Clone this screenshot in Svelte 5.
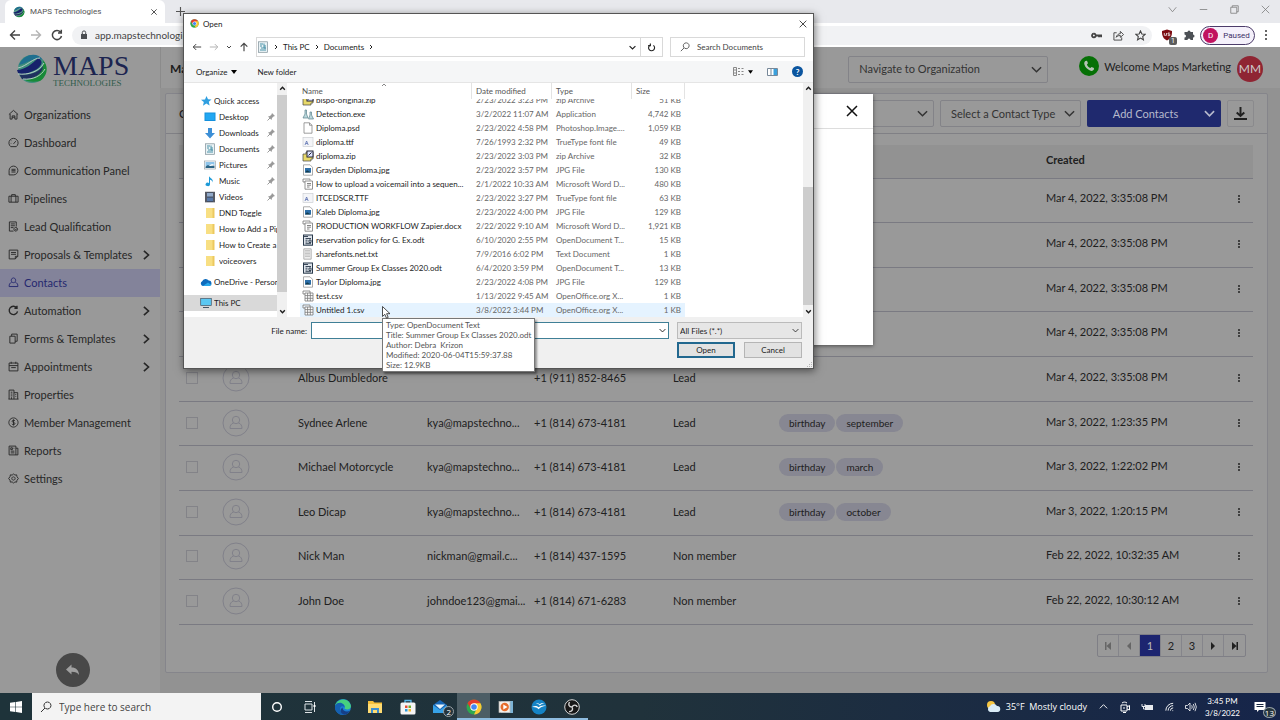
<script>
    const menu = [
        {text: 'Organizations', d: 'M1 6 6 1.5 11 6M2.3 5.5V11H4.5V7.5H7.5V11H9.8V5.5M4.5 9H7.5'},
        {text: 'Dashboard', d: 'M3 10.5A5 5 0 1 1 9 10.5ZM6 7.5 8.5 4.5M3 7H3.6M4 4.2 4.4 4.6'},
        {text: 'Communication Panel', d: 'M1.2 10.8V6A4.8 4.8 0 1 1 6 10.8ZM3.8 4.7H8.2M3.8 6.2H8.2M3.8 7.7H8.2'},
        {text: 'Pipelines', d: 'M1 3.5H11V10H1ZM4 3.5V1.8H8V3.5M3.4 3.5V10M8.6 3.5V10'},
        {text: 'Lead Qualification', d: 'M6 11H1.5V1H9V6M3 3.2H7.5M3 5.2H7.5M3 7.2H6M8.5 7A2 2 0 1 1 8.4 7M7.5 9 8.4 9.8 9.5 8.2'},
        {text: 'Proposals & Templates', d: 'M1.3 1.2H10.7V8L8 10.8H1.3ZM8 10.8V8H10.7M3.3 3.8H8.7M3.3 5.8H8.7', arrow: true},
        {text: 'Contacts', d: 'M6 1A2.4 2.6 0 1 1 5.9 1M4 5.8C2 6.6 1.2 7.6 1.2 10.4H10.8C10.8 7.6 10 6.6 8 5.8', active: true},
        {text: 'Automation', d: 'M10.4 7A4.6 4.6 0 1 1 9.4 2.9M9.8 .8V3.6H7', arrow: true, bold: true},
        {text: 'Forms & Templates', d: 'M2 3.5H7.8V11H2ZM4 3.5V1.2H10V9H7.8', arrow: true},
        {text: 'Appointments', d: 'M1.2 2.2H10.8V10.8H1.2ZM1.2 5H10.8M3.5 .8V3M8.5 .8V3M3.5 7.2H8.5', arrow: true},
        {text: 'Properties', d: 'M1.2 11V1.2H6.5V11M6.5 4H10.6V11M.5 11H11.5M3 3.5H4.8M3 5.5H4.8M3 7.5H4.8M8 6H9M8 8H9M3.8 9V11'},
        {text: 'Member Management', d: 'M6 1A5 5 0 1 1 5.9 1M7.6 4.2C6.5 3 4.4 3.5 4.5 4.8 4.6 6.2 7.6 5.6 7.6 7.2 7.5 8.6 5 8.8 4.2 7.5M6 2.6V9.2'},
        {text: 'Reports', d: 'M1.2 1.2H8.6V10.8H1.2ZM8.6 3.5H10.8V10.8H8.6M3 3H4.8V5H3ZM6 3.5H7M3 6.7H7M3 8.6H7'},
        {text: 'Settings', d: 'M6 .9 7.4 2.3 9.4 2 9.8 4 11.3 6 9.8 8 9.4 10 7.4 9.7 6 11.1 4.6 9.7 2.6 10 2.2 8 .7 6 2.2 4 2.6 2 4.6 2.3ZM6 4.2A1.8 1.8 0 1 1 5.9 4.2'},
    ];

    const contacts = [
        {created: 'Mar 4, 2022, 3:35:08 PM'},
        {created: 'Mar 4, 2022, 3:35:08 PM'},
        {created: 'Mar 4, 2022, 3:35:08 PM'},
        {created: 'Mar 4, 2022, 3:35:08 PM'},
        {name: 'Albus Dumbledore', phone: '+1 (911) 852-8465', type: 'Lead', created: 'Mar 4, 2022, 3:35:08 PM'},
        {name: 'Sydnee Arlene', email: 'kya@mapstechno...', phone: '+1 (814) 673-4181', type: 'Lead', tags: ['birthday', 'september'], created: 'Mar 3, 2022, 1:23:35 PM'},
        {name: 'Michael Motorcycle', email: 'kya@mapstechno...', phone: '+1 (814) 673-4181', type: 'Lead', tags: ['birthday', 'march'], created: 'Mar 3, 2022, 1:22:02 PM'},
        {name: 'Leo Dicap', email: 'kya@mapstechno...', phone: '+1 (814) 673-4181', type: 'Lead', tags: ['birthday', 'october'], created: 'Mar 3, 2022, 1:20:15 PM'},
        {name: 'Nick Man', email: 'nickman@gmail.c...', phone: '+1 (814) 437-1595', type: 'Non member', created: 'Feb 22, 2022, 10:32:35 AM'},
        {name: 'John Doe', email: 'johndoe123@gmai...', phone: '+1 (814) 671-6283', type: 'Non member', created: 'Feb 22, 2022, 10:30:12 AM'},
    ];

    const places = [
        {text: 'Quick access', icon: 'star', top: true},
        {text: 'Desktop', icon: 'desktop', pin: true},
        {text: 'Downloads', icon: 'down', pin: true},
        {text: 'Documents', icon: 'docs', pin: true},
        {text: 'Pictures', icon: 'pictures', pin: true},
        {text: 'Music', icon: 'music', pin: true},
        {text: 'Videos', icon: 'video', pin: true},
        {text: 'DND Toggle', icon: 'folder'},
        {text: 'How to Add a Pipeline', icon: 'folder'},
        {text: 'How to Create a Form', icon: 'folder'},
        {text: 'voiceovers', icon: 'folder'},
        {text: 'OneDrive - Personal', icon: 'cloud', top: true, spaced: true},
        {text: 'This PC', icon: 'pc', top: true, spaced: true, current: true},
    ];

    const files = [
        ['zip', 'bispo-original.zip', '2/23/2022 3:23 PM', 'zip Archive', '51 KB'],
        ['exe', 'Detection.exe', '3/2/2022 11:07 AM', 'Application', '4,742 KB'],
        ['blank', 'Diploma.psd', '2/23/2022 4:58 PM', 'Photoshop.Image....', '1,059 KB'],
        ['font', 'diploma.ttf', '7/26/1993 2:32 PM', 'TrueType font file', '49 KB'],
        ['zip', 'diploma.zip', '2/23/2022 3:03 PM', 'zip Archive', '32 KB'],
        ['jpg', 'Grayden Diploma.jpg', '2/23/2022 3:57 PM', 'JPG File', '130 KB'],
        ['word', 'How to upload a voicemail into a sequen...', '2/1/2022 10:33 AM', 'Microsoft Word D...', '480 KB'],
        ['font', 'ITCEDSCR.TTF', '2/23/2022 3:27 PM', 'TrueType font file', '63 KB'],
        ['jpg', 'Kaleb Diploma.jpg', '2/23/2022 4:00 PM', 'JPG File', '129 KB'],
        ['word', 'PRODUCTION WORKFLOW Zapier.docx', '2/22/2022 9:10 AM', 'Microsoft Word D...', '1,921 KB'],
        ['odt', 'reservation policy for G. Ex.odt', '6/10/2020 2:55 PM', 'OpenDocument T...', '15 KB'],
        ['txt', 'sharefonts.net.txt', '7/9/2016 6:02 PM', 'Text Document', '1 KB'],
        ['odt', 'Summer Group Ex Classes 2020.odt', '6/4/2020 3:59 PM', 'OpenDocument T...', '13 KB'],
        ['jpg', 'Taylor Diploma.jpg', '2/23/2022 4:08 PM', 'JPG File', '129 KB'],
        ['csv', 'test.csv', '1/13/2022 9:45 AM', 'OpenOffice.org X...', '1 KB'],
        ['csv', 'Untitled 1.csv', '3/8/2022 3:44 PM', 'OpenOffice.org X...', '1 KB'],
    ];

    const apps = ['cortana', 'tasks', 'edge', 'explorer', 'store', 'mail', 'chrome', 'player', 'office', 'obs'];
    const running = ['chrome', 'player', 'office', 'obs'];

    let file_name = '';
    let page = 1;
</script>

{#snippet line(d, size = 12, width = 1)}
    <svg width={size} height={size} viewBox="0 0 12 12" fill="none" stroke="currentColor" stroke-width={width} aria-hidden="true"><path {d} /></svg>
{/snippet}

{#snippet globe(size)}
    <svg width={size} height={size} viewBox="0 0 32 32" aria-hidden="true">
        <circle cx="16" cy="16" r="14" fill="#3f8f7c" />
        <path d="M3 12C8 0 22-1 27 7 20 3 14 9 3 12Z" fill="#1f6f8f" />
        <path d="M1 17C9 17 17 10 22 5 29 8 25 15 17 18 11 21 5 22 2 20Z" fill="#17226b" />
        <path d="M27 7C34 15 30 24 24 28 19 29 13 29 9 27 21 26 29 18 27 7Z" fill="#188a38" />
        <path d="M3 21C12 23 22 20 27 13 27 22 15 27 6 26Z" fill="#20315f" />
        <path d="M2 15C11 13 17 5 24 5M2 21C12 22 23 19 28 10M7 26C17 27 25 23 29 16" fill="none" stroke="#b5c9c2" stroke-width="1" />
    </svg>
{/snippet}

{#snippet chrome_logo(size)}
    <svg width={size} height={size} viewBox="0 0 16 16" aria-hidden="true">
        <circle cx="8" cy="8" r="7.5" fill="#2da94f" />
        <path d="M1.5 4.2A7.5 7.5 0 0 1 14.5 4.2L8 8Z" fill="#e33b2e" />
        <path d="M14.5 4.2A7.5 7.5 0 0 1 8 15.5L11 9 8 4.2Z" fill="#fcc934" />
        <path d="M1.5 4.2 4.8 9.8 8 8 8 4.2Z" fill="#e33b2e" />
        <circle cx="8" cy="8" r="3.7" fill="#fff" />
        <circle cx="8" cy="8" r="2.8" fill="#4285f4" />
    </svg>
{/snippet}

{#snippet place_icon(name)}
    <svg width="12" height="12" viewBox="0 0 12 12" aria-hidden="true">
        {#if name === 'star'}
            <path d="M6.5 1 8 4.2 11.5 4.5 8.8 6.8 9.6 10.5 6.3 8.6 3 10.8 3.8 7 1 4.8 5 4.4Z" fill="#2f9fe0" />
        {:else if name === 'desktop'}
            <rect x=".5" y="1.5" width="11" height="8.5" fill="#1590dc" /><rect x="1.5" y="2.5" width="9" height="6.5" fill="#22a7f2" />
        {:else if name === 'down'}
            <path d="M4 1H8V6H11L6 11.5 1 6H4Z" fill="#3d8fd6" />
        {:else if name === 'docs'}
            <rect x="1.5" y=".8" width="9" height="10.5" fill="#e9f2f5" stroke="#7d8f97" stroke-width=".7" /><path d="M3 3H6M3 5H5M3 9H9M7 2.5V7M8 4V8M4 7H9" stroke="#4a92a8" />
        {:else if name === 'pictures'}
            <rect x=".5" y="2" width="11" height="8" fill="#fff" stroke="#9aa4aa" stroke-width=".7" /><path d="M1.5 3H10.5V6L8 5 4 7H1.5Z" fill="#8ec4ea" /><path d="M1.5 7.5 4 6 6 7 10.5 6.5V9H1.5Z" fill="#2c6586" />
        {:else if name === 'music'}
            <path d="M5 1C5.5 3 9.5 3.5 8.8 7.5 8.4 5.5 7 5 6 4.7V9.5A2.2 1.7 0 1 1 5 8Z" fill="#1f9bd8" />
        {:else if name === 'video'}
            <rect x="1" y=".8" width="10" height="10.5" fill="#3a3f4c" /><rect x="3" y="1.8" width="6" height="3.8" fill="#91a9c9" /><rect x="3" y="6.5" width="6" height="3.8" fill="#5778a8" /><path d="M2 1.5V11M10 1.5V11" stroke="#ddd" stroke-width=".7" stroke-dasharray="1 1" />
        {:else if name === 'folder'}
            <path d="M2 1H10V11H2Z" fill="#f8df83" /><path d="M8.5 1H10.5V11H8.5Z" fill="#ecc95f" />
        {:else if name === 'cloud'}
            <path d="M2.8 10A2.5 2.5 0 0 1 2.2 5.3 3.7 3.7 0 0 1 8.7 4.5 2.8 2.8 0 0 1 9.5 10Z" fill="#0f6cbd" /><path d="M2.8 10 8 6.5 11.5 9 9.5 10Z" fill="#28a8ea" />
        {:else}
            <rect x=".7" y="1.5" width="10.6" height="7" fill="#5cc8f2" stroke="#456" stroke-width=".7" /><path d="M3 10.5H9" stroke="#456" />
        {/if}
    </svg>
{/snippet}

{#snippet file_icon(name)}
    <svg width="12" height="12" viewBox="0 0 12 12" fill="none" aria-hidden="true">
        {#if name === 'zip'}
            <path d="M1 4H4V2H11V9H9V11H1Z" fill="#e8d96a" stroke="#444" stroke-width=".7" /><rect x="5" y="1" width="6" height="6" fill="#dfe4ff" stroke="#223" /><path d="M6.5 5.5 9.5 2.5" stroke="#223" />
        {:else if name === 'exe'}
            <path d="M3 2V6L1 10H6L4.5 6V2ZM8 4V7L6.5 11H11.5L9.5 7V4Z" fill="#bcd9dd" stroke="#5b838c" stroke-width=".7" />
        {:else if name === 'blank'}
            <path d="M2 .8H7.5L10 3.3V11.2H2ZM7.5 .8V3.3H10" fill="#fff" stroke="#777" stroke-width=".7" />
        {:else if name === 'font'}
            <rect x="1" y="1.5" width="10" height="9" fill="#f4f5f8" stroke="#c5c8ce" stroke-width=".6" /><path d="M3 9 4.6 5 6.2 9M3.8 7.5H5.5" stroke="#5b70b0" stroke-width=".8" />
        {:else if name === 'jpg'}
            <path d="M1.5 .8H8L10.5 3.3V11.2H1.5Z" fill="#fff" stroke="#888" stroke-width=".7" /><rect x="3" y="4" width="6" height="4.5" fill="#2c6ea8" /><path d="M3 8.5 5 6.3 9 8.5Z" fill="#143c4e" />
        {:else if name === 'word'}
            <path d="M3 3H10.5V11.2H3ZM1 1H8V2.5M1 1V4H3" fill="#fff" stroke="#777" stroke-width=".8" /><path d="M5 5.5H9M5 7.2H9M5 9H7.5" stroke="#666" stroke-width=".8" />
        {:else if name === 'odt'}
            <rect x="1.5" y="1" width="9" height="10.2" fill="#dde3ea" stroke="#29394b" /><path d="M2 2.5H6M3.5 4.5H9M3.5 6.2H5.5M3.5 8H5.5M3.5 9.7H9M7 6V8.5H9V6Z" stroke="#29394b" stroke-width=".9" />
        {:else if name === 'txt'}
            <path d="M1.8 .8H9.2V11.2H1.8Z" fill="#eee" stroke="#999" stroke-width=".7" /><path d="M3 2.5H8M3 4H8M3 5.5H8M3 7H8M3 8.5H8" stroke="#aaa" stroke-width=".6" />
        {:else}
            <path d="M3 3H11V11H3ZM3 5.6H11M3 8.3H11M5.6 3V11M8.3 3V11M1 1H8V3M1 1V4H3" fill="#fff" stroke="#777" stroke-width=".8" />
        {/if}
    </svg>
{/snippet}

{#snippet app_icon(name)}
    {#if name === 'chrome'}
        {@render chrome_logo(16)}
    {:else}
        <svg width="18" height="18" viewBox="0 0 18 18" fill="none" aria-hidden="true">
            {#if name === 'cortana'}
                <circle cx="9" cy="9" r="4.3" stroke="#fff" stroke-width="1.4" />
            {:else if name === 'tasks'}
                <path d="M4 6H11V12H4ZM4 3.5H11M4 14.5H11M13.5 4V14" stroke="#dde3e6" /><path d="M13.5 7V9" stroke="#fff" stroke-width="2" />
            {:else if name === 'edge'}
                <circle cx="9" cy="9" r="8" fill="#1b7fd4" /><path d="M1.2 7.5C3 0 15 -1 17 8 17 12 11.5 12 10.5 10.5 12.5 7.5 8 3.5 1.2 7.5Z" fill="#46d07f" /><path d="M1.2 7.5C4 3 10.5 4.8 10.5 9 5 6 4.5 14 10 16.9 3 17 0 12 1.2 7.5Z" fill="#1560b0" /><path d="M8.5 9.5C8.5 13 12.5 14.5 16 12.8 14 16.5 11 17 9.5 16.5 5.8 15 6 11 8.5 9.5Z" fill="#163f86" />
            {:else if name === 'explorer'}
                <path d="M2 3H7L8.5 4.5H16V15H2Z" fill="#f5bf3b" /><path d="M2 6H16V15H2Z" fill="#ffdc72" /><path d="M5 15V10H13V15H11V12H7V15Z" fill="#3d8ed0" />
            {:else if name === 'store'}
                <path d="M6 5V2.5H12V5" stroke="#59b7e8" stroke-width="1.3" /><rect x="1.5" y="4.5" width="15" height="12" rx="1.5" fill="#f4f4f4" /><path d="M6 7.5H8.5V10H6Z" fill="#e74b32" /><path d="M9.5 7.5H12V10H9.5Z" fill="#6fae2f" /><path d="M6 11H8.5V13.5H6Z" fill="#2e9ad8" /><path d="M9.5 11H12V13.5H9.5Z" fill="#f4b92c" />
            {:else if name === 'mail'}
                <path d="M1 7 8 2 15 7V15H1Z" fill="#1766b5" /><path d="M3 6.5H13L8 11Z" fill="#eaf5fc" /><path d="M1 7 8 12 15 7V15H1Z" fill="#37a2e8" />
            {:else if name === 'player'}
                <rect x="4" y="3" width="12" height="12" fill="#7db4d6" /><rect x="2" y="3.5" width="11" height="11" fill="#f3f0ec" stroke="#b9b6b2" stroke-width=".7" /><circle cx="7.7" cy="9" r="4.2" fill="#e76d2c" /><path d="M6.3 6.5 10.5 9 6.3 11.5Z" fill="#fff" />
            {:else if name === 'office'}
                <circle cx="9" cy="9" r="7.5" fill="#1583c5" /><path d="M2 9C5 7.5 7 8 8.5 9.3 10 7.8 13 6.8 16.2 7.8 12.5 8 10 9.5 8.7 11.2 7 9.6 5 8.8 2 9ZM6 5.5C7.5 5 8.8 5.3 9.6 6.2 11 5 12.5 4.8 14.5 5 12.3 5.5 11 6.3 9.9 7.5 8.8 6.2 7.6 5.7 6 5.5Z" fill="#fff" />
            {:else}
                <circle cx="9" cy="9" r="7.3" fill="#171717" stroke="#d5d5d5" /><path d="M9 9C6 9 5 6.5 6.5 4M9 9C10.5 6.4 13.3 6.6 14.3 9M9 9C10.5 11.7 8.8 14 6 13.5" stroke="#d5d5d5" stroke-width="1.4" />
            {/if}
        </svg>
    {/if}
{/snippet}

<div class="screen">
    <header class="browser">
        <div class="tabs">
            <div class="tab">
                {@render globe(12)}
                <span>MAPS Technologies</span>
                <button aria-label="Close tab">{@render line('M2 2 10 10M10 2 2 10', 8, 1.5)}</button>
            </div>
            <button class="plus" aria-label="New tab">{@render line('M6 0V12M0 6H12', 9, 1.5)}</button>
            <div class="window-buttons">
                <button aria-label="Search tabs">{@render line('M1 3 6 9 11 3', 9)}</button>
                <button aria-label="Minimize">{@render line('M1 6H11', 9)}</button>
                <button aria-label="Restore">{@render line('M1 3H9V11H1ZM3 3V1H11V9H9', 9)}</button>
                <button aria-label="Close">{@render line('M1 1 11 11M11 1 1 11', 9)}</button>
            </div>
        </div>
        <div class="toolbar">
            <button aria-label="Back">{@render line('M11 6H1.5M6 1.5 1.5 6 6 10.5', 12, 1.4)}</button>
            <button class="faded" aria-label="Forward">{@render line('M1 6H10.5M6 1.5 10.5 6 6 10.5', 12, 1.4)}</button>
            <button aria-label="Reload">{@render line('M10.5 7A4.6 4.6 0 1 1 9.5 3M10.3 .8V4H7', 12, 1.5)}</button>
            <div class="address">
                <svg width="8" height="10" viewBox="0 0 8 10" aria-hidden="true"><path d="M1 4H7V9H1Z" fill="#4a4d51" /><path d="M2.3 4V2.6A1.7 1.7 0 0 1 5.7 2.6V4" fill="none" stroke="#4a4d51" /></svg>
                <input aria-label="Address" value="app.mapstechnologies" />
                <button aria-label="Passwords">{@render line('M3.2 4A2 2 0 1 1 3.1 4M5.2 6H11V8M8.8 6V8', 11, 2)}</button>
                <button aria-label="Share">{@render line('M4 3H1V11H9.5V8M3.5 8C4 5.5 6 4 8 4V1.5L11.5 5 8 8V6C6 6 4.5 6.5 3.5 8Z', 11)}</button>
                <button aria-label="Bookmark">{@render line('M6 1 7.5 4.4 11 4.7 8.4 7.1 9.2 10.7 6 8.8 2.8 10.7 3.6 7.1 1 4.7 4.5 4.4Z', 11, 1.2)}</button>
            </div>
            <button class="shield" aria-label="Ad blocker">
                <svg width="12" height="12" viewBox="0 0 12 12" aria-hidden="true"><path d="M6 .5 11 2C11.2 7 9.5 10 6 11.5 2.5 10 .8 7 1 2Z" fill="#7d0d12" /><path d="M3.3 4V6.3H5.5V4M8.8 4H7V5.2H8.8V6.6H6.8" fill="none" stroke="#eee" stroke-width=".8" /></svg>
                <span>1</span>
            </button>
            <button class="puzzle" aria-label="Extensions">
                <svg width="12" height="12" viewBox="0 0 24 24" aria-hidden="true"><path d="M20 11V6H15A3 3 0 1 0 9 6H3V11A3 3 0 1 1 3 17V22H9A3 3 0 1 1 15 22H20V17A3 3 0 1 0 20 11Z" fill="#4d5156" /></svg>
            </button>
            <button class="profile"><b>D</b>Paused</button>
            <button class="more" aria-label="Browser menu">
                <svg width="4" height="12" viewBox="0 0 4 12" fill="#333" aria-hidden="true"><circle cx="2" cy="2" r="1" /><circle cx="2" cy="6" r="1" /><circle cx="2" cy="10" r="1" /></svg>
            </button>
        </div>
    </header>

    <div class="app">
        <aside>
            <div class="logo">
                {@render globe(32)}
                <div>
                    <strong>MAPS</strong>
                    <small>TECHNOLOGIES</small>
                </div>
            </div>
            <nav>
                {#each menu as item (item.text)}
                    <a href="#{item.text}" class:active={item.active}>
                        {@render line(item.d, 11, item.bold ? 1.5 : 1)}
                        <span>{item.text}</span>
                        {#if item.arrow}
                            {@render line('M3.5 1 9 6 3.5 11', 10, 2)}
                        {/if}
                    </a>
                {/each}
            </nav>
            <button class="reply" aria-label="Go back">
                <svg width="16" height="14" viewBox="0 0 16 14" aria-hidden="true"><path d="M6.5 1.5V4.5C11 4.5 13.8 7 14 12 12.5 9.5 10.5 8.7 6.5 8.7V11.5L1 6.5Z" fill="#a0a0a0" /></svg>
            </button>
        </aside>

        <main>
            <div class="top">
                <h1>Maps</h1>
                <div class="select organization">
                    <select aria-label="Navigate to Organization"><option>Navigate to Organization</option></select>
                    {@render line('M1 3.5 6 8.5 11 3.5', 11, 1.6)}
                </div>
                <svg class="phone" width="20" height="20" viewBox="0 0 20 20" aria-hidden="true"><circle cx="10" cy="10" r="10" fill="#067006" /><path d="M6.3 5 8 4.8 9 7.3 7.9 8.5C8.6 10.2 9.7 11.4 11.4 12.1L12.6 11 15 12.1 14.8 13.8C14 15 12.5 15.2 11 14.5 8 13.3 6.3 11.3 5.4 8.6 5 7.2 5.3 5.9 6.3 5Z" fill="#b5c3b5" /></svg>
                <span>Welcome Maps Marketing</span>
                <span class="initials">MM</span>
            </div>

            <section>
                <div class="filters">
                    <h2>Contacts</h2>
                    <div class="select list">
                        <select aria-label="Filter"><option></option></select>
                        {@render line('M1 3.5 6 8.5 11 3.5', 11, 1.6)}
                    </div>
                    <div class="select type">
                        <select aria-label="Contact type"><option>Select a Contact Type</option></select>
                        {@render line('M1 3.5 6 8.5 11 3.5', 11, 1.6)}
                    </div>
                    <button class="add"><span>Add Contacts</span>{@render line('M1 3.5 6 8.5 11 3.5', 11, 1.8)}</button>
                    <button class="download" aria-label="Download">{@render line('M6 0V8M2.5 5 6 8.2 9.5 5M0 11H12', 13, 1.8)}</button>
                </div>
                <table class="contacts">
                    <colgroup>
                        <col class="c-check" /><col class="c-avatar" /><col class="c-name" /><col class="c-email" />
                        <col class="c-phone" /><col class="c-type" /><col /><col class="c-created" /><col class="c-more" />
                    </colgroup>
                    <thead>
                        <tr><th></th><th></th><th></th><th></th><th></th><th></th><th></th><th>Created</th><th></th></tr>
                    </thead>
                    <tbody>
                        {#each contacts as contact}
                            <tr>
                                <td><input type="checkbox" aria-label="Select contact" /></td>
                                <td>
                                    <svg class="avatar" width="28" height="28" viewBox="0 0 28 28" fill="none" stroke="#81818a" aria-hidden="true"><circle cx="14" cy="14" r="13" /><circle cx="14" cy="11" r="3.7" /><path d="M11.5 14C9 14.8 8 16.5 8 19.5H20C20 16.5 19 14.8 16.5 14" /></svg>
                                </td>
                                <td>{contact.name ?? ''}</td>
                                <td>{contact.email ?? ''}</td>
                                <td>{contact.phone ?? ''}</td>
                                <td>{contact.type ?? ''}</td>
                                <td>
                                    {#each contact.tags ?? [] as tag}
                                        <span class="tag">{tag}</span>
                                    {/each}
                                </td>
                                <td class="created">{contact.created}</td>
                                <td>
                                    <button aria-label="Row actions">
                                        <svg width="4" height="10" viewBox="0 0 4 10" fill="#222" aria-hidden="true"><circle cx="2" cy="2" r="1" /><circle cx="2" cy="5" r="1" /><circle cx="2" cy="8" r="1" /></svg>
                                    </button>
                                </td>
                            </tr>
                        {/each}
                    </tbody>
                </table>
                <div class="pages">
                    <button class="off" aria-label="First page"><svg width="8" height="8" viewBox="0 0 8 8" fill="currentColor" aria-hidden="true"><path d="M1 0H2.5V8H1ZM7 0V8L2.5 4Z" /></svg></button>
                    <button class="off" aria-label="Previous page"><svg width="8" height="8" viewBox="0 0 8 8" fill="currentColor" aria-hidden="true"><path d="M6 0V8L2 4Z" /></svg></button>
                    {#each [1, 2, 3] as number}
                        <button class:current={page === number} on:click={() => page = number}>{number}</button>
                    {/each}
                    <button aria-label="Next page"><svg width="8" height="8" viewBox="0 0 8 8" fill="currentColor" aria-hidden="true"><path d="M2 0V8L6 4Z" /></svg></button>
                    <button aria-label="Last page"><svg width="8" height="8" viewBox="0 0 8 8" fill="currentColor" aria-hidden="true"><path d="M5.5 0H7V8H5.5ZM1 0V8L5.5 4Z" /></svg></button>
                </div>
            </section>
        </main>
    </div>

    <footer class="taskbar">
        <button class="start" aria-label="Start"><svg width="12" height="12" viewBox="0 0 12 12" fill="#fff" aria-hidden="true"><path d="M0 1.7 5.4 1V5.7H0ZM6 .9 12 0V5.7H6ZM0 6.3H5.4V11L0 10.3ZM6 6.3H12V12L6 11.1Z" /></svg></button>
        <label class="search">
            {@render line('M7.5 1A3.5 3.5 0 1 1 7.4 1M5 7 1 11', 12)}
            <input placeholder="Type here to search" />
        </label>
        <div class="apps">
            {#each apps as app}
                <button aria-label={app} class:running={running.includes(app)} class:front={app === 'chrome'}>
                    {@render app_icon(app)}
                    {#if app === 'mail'}<span class="count">2</span>{/if}
                </button>
            {/each}
        </div>
        <div class="tray">
            <svg width="15" height="13" viewBox="0 0 15 13" aria-hidden="true"><circle cx="5" cy="5" r="4" fill="#f5c542" /><path d="M4 12A3 3 0 0 1 4 6.3 4 4 0 0 1 11 6 3 3 0 0 1 11.5 12Z" fill="#d9ecf7" /></svg>
            <span class="weather">35°F&nbsp; Mostly cloudy</span>
            <div class="signals">
                {@render line('M2 8 6 4 10 8', 11)}
                {@render line('M2 4H8V10H2ZM8 6 10.5 4.5V9L8 8M3 2C4.5 .8 6.5 .8 8 2M4 7H6M4 11.5H7', 12)}
                <svg width="13" height="10" viewBox="0 0 13 10" aria-hidden="true"><path d="M4 3H12V8H4Z" fill="#e8eaee" /><path d="M1 2V4.5H4V2M2.5 4.5V7H5" fill="none" stroke="#e8eaee" /></svg>
                {@render line('M2 10.5A8 8 0 0 1 10 2.5M4.5 10.5A5.5 5.5 0 0 1 10 5M7 10.5A3 3 0 0 1 10 7.5M9.2 10.5H10', 11)}
                {@render line('M.5 4.5H2.5L5 2V10L2.5 7.5H.5ZM6.7 4.3Q7.8 6 6.7 7.7M8.3 3Q10.3 6 8.3 9M10 1.8Q12.7 6 10 10.2', 12, .8)}
            </div>
            <div class="clock"><span>3:45 PM</span><span>3/8/2022</span></div>
            <button class="notes" aria-label="Notifications">
                <svg width="12" height="12" viewBox="0 0 12 12" aria-hidden="true"><path d="M.5 1H11.5V9H5L3 11V9H.5Z" fill="#fff" /><path d="M2.5 3.5H9.5M2.5 5.5H9.5" stroke="#16253f" /></svg>
                <span class="count">13</span>
            </button>
        </div>
    </footer>

    <div class="modal">
        <div class="modal-head"><button aria-label="Close">{@render line('M1 1 11 11M11 1 1 11', 12, 1.5)}</button></div>
    </div>

    <div class="dialog" role="dialog" aria-label="Open">
        <div class="title">
            {@render chrome_logo(9)}
            <span>Open</span>
            <button aria-label="Close">{@render line('M1 1 11 11M11 1 1 11', 8, 1.2)}</button>
        </div>
        <div class="path-row">
            <button aria-label="Back">{@render line('M11 6H1.5M5 2.5 1.5 6 5 9.5', 10, 1.2)}</button>
            <button class="faded" aria-label="Forward">{@render line('M1 6H10.5M7 2.5 10.5 6 7 9.5', 10, 1.2)}</button>
            <button aria-label="Recent">{@render line('M2 4 6 8 10 4', 6, 2)}</button>
            <button aria-label="Up">{@render line('M6 11V1.5M2 5.5 6 1.5 10 5.5', 10, 1.4)}</button>
            <div class="path">
                {@render place_icon('docs')}
                {@render line('M4 2 8 6 4 10', 6, 2)}
                <span>This PC</span>
                {@render line('M4 2 8 6 4 10', 6, 2)}
                <span>Documents</span>
                {@render line('M4 2 8 6 4 10', 6, 2)}
                <button class="drop" aria-label="Previous locations">{@render line('M1 3.5 6 8.5 11 3.5', 7, 2)}</button>
                <button class="refresh" aria-label="Refresh">{@render line('M4 3A4 4 0 1 0 8.5 3.2M4.5 .5V3.5H1.5', 9, 1.5)}</button>
            </div>
            <label class="find">
                {@render line('M7.5 1A3.5 3.5 0 1 1 7.4 1M5 7 1 11', 10)}
                <input placeholder="Search Documents" />
            </label>
        </div>
        <div class="commands">
            <button>Organize <svg width="6" height="4" viewBox="0 0 6 4" aria-hidden="true"><path d="M0 0H6L3 4Z" /></svg></button>
            <button>New folder</button>
            <div class="views">
                <button aria-label="Change view">
                    <svg width="11" height="9" viewBox="0 0 11 9" fill="none" stroke="#888" aria-hidden="true"><path d="M.5 .5H3.5V8.5H.5ZM.5 3H3.5M.5 6H3.5M5 1.5H7M8.5 1.5H10.5M5 4.5H7M8.5 4.5H10.5M5 7.5H7M8.5 7.5H10.5" /></svg>
                    <svg width="5" height="4" viewBox="0 0 6 4" aria-hidden="true"><path d="M0 0H6L3 4Z" /></svg>
                </button>
                <button aria-label="Preview pane"><svg width="11" height="8" viewBox="0 0 11 8" aria-hidden="true"><path d="M.5 .5H10.5V7.5H.5ZM4 .5V7.5" fill="#fff" stroke="#789" /><path d="M6.5 1H10V7H6.5Z" fill="#3aa0dc" /></svg></button>
                <button class="help" aria-label="Help">?</button>
            </div>
        </div>
        <div class="browse">
            <ul>
                {#each places as place}
                    <li class:top-level={place.top} class:spaced={place.spaced} class:current={place.current}>
                        {@render place_icon(place.icon)}
                        <span>{place.text}</span>
                        {#if place.pin}
                            <svg class="pin" width="8" height="8" viewBox="0 0 8 8" aria-hidden="true"><path d="M5 0 8 3 6.5 3.5 5 5 4.5 7 1 3.5 3 3 4.5 1.5Z" fill="#999" /><path d="M3 5 .5 7.5" stroke="#999" /></svg>
                        {/if}
                    </li>
                {/each}
            </ul>
            <div class="scroll">
                {@render line('M2 8 6 4 10 8', 7, 2.4)}
                <i class="left-thumb"></i>
                {@render line('M2 4 6 8 10 4', 7, 2.4)}
            </div>
            <table class="files">
                <thead>
                    <tr><th>Name{@render line('M2 8 6 4 10 8', 6, 1.4)}</th><th>Date modified</th><th>Type</th><th>Size</th></tr>
                </thead>
                <tbody>
                    {#each files as [icon, name, date, type, size], index}
                        <tr class:hover={index === files.length - 1}>
                            <td>{@render file_icon(icon)}<span>{name}</span></td>
                            <td>{date}</td>
                            <td>{type}</td>
                            <td>{size}</td>
                        </tr>
                    {/each}
                </tbody>
            </table>
            <div class="scroll">
                {@render line('M2 8 6 4 10 8', 7, 2.4)}
                <i class="right-thumb"></i>
                {@render line('M2 4 6 8 10 4', 7, 2.4)}
            </div>
        </div>
        <div class="bottom">
            <label for="file-name">File name:</label>
            <div class="select name">
                <!-- svelte-ignore a11y_autofocus -->
                <input id="file-name" bind:value={file_name} autofocus />
                {@render line('M1 3.5 6 8.5 11 3.5', 7, 1.6)}
            </div>
            <div class="select kind">
                <select aria-label="File type"><option>All Files (*.*)</option></select>
                {@render line('M1 3.5 6 8.5 11 3.5', 7, 1.4)}
            </div>
            <div class="actions">
                <button class="primary">Open</button>
                <button>Cancel</button>
            </div>
            <svg class="grip" width="7" height="7" viewBox="0 0 7 7" fill="#b5b5b5" aria-hidden="true"><path d="M5 1H6V2H5ZM5 3H6V4H5ZM3 3H4V4H3ZM5 5H6V6H5ZM3 5H4V6H3ZM1 5H2V6H1Z" /></svg>
        </div>
    </div>

    <div class="tooltip" role="tooltip">
        <span>Type: OpenDocument Text</span>
        <span>Title: Summer Group Ex Classes 2020.odt</span>
        <span>Author: Debra&nbsp; Krizon</span>
        <span>Modified: 2020-06-04T15:59:37.88</span>
        <span>Size: 12.9KB</span>
    </div>
    <svg class="pointer" width="9" height="13" viewBox="0 0 9 13" aria-hidden="true"><path d="M.5 .5V10.5L2.8 8.3 4.5 12.2 6.2 11.4 4.6 7.7H8Z" fill="#fff" stroke="#222" stroke-width=".8" /></svg>
</div>

<style>
    :global(body) {
        margin: 0;
    }
    .screen {
        position: relative;
        display: flex;
        flex-direction: column;
        min-height: 100vh;
        overflow: hidden;
        background: #929292;
        font: 11px/16px Lato, sans-serif;
        color: #202020;
    }
    * {
        box-sizing: border-box;
    }
    button, input, select {
        margin: 0;
        padding: 0;
        border: 0;
        background: none;
        font: inherit;
        color: inherit;
        min-width: 0;
    }
    button {
        display: flex;
        align-items: center;
        justify-content: center;
    }
    input, select {
        outline: none;
        appearance: none;
        border-radius: 0;
    }
    svg {
        flex: none;
        display: block;
    }
    h1, h2 {
        margin: 0;
        font-size: 12px;
        font-weight: 700;
    }

    /* browser */
    .tabs {
        display: flex;
        align-items: center;
        height: 23px;
        background: #e8e9ed;
        color: #555;
    }
    .tab {
        display: flex;
        align-items: center;
        align-self: stretch;
        gap: 5px;
        width: 160px;
        margin-left: 5px;
        padding: 0 7px 0 8px;
        border-radius: 6px 6px 0 0;
        background: #fff;
        font: 8px Roboto, sans-serif;
    }
    .tab span {
        flex: 1;
    }
    .plus {
        margin-left: 11px;
    }
    .window-buttons {
        display: flex;
        gap: 22px;
        margin-left: auto;
        padding: 0 10px 4px 0;
        color: #777;
    }
    .toolbar {
        display: flex;
        align-items: center;
        height: 24px;
        padding: 0 12px 0 9px;
        background: #fff;
        color: #444;
    }
    .toolbar > button {
        margin-right: 9px;
    }
    .faded {
        opacity: .4;
    }
    .address {
        display: flex;
        align-items: center;
        flex: 1;
        height: 19px;
        margin-right: 9px;
        padding: 0 6px 0 8px;
        gap: 11px;
        border-radius: 10px;
        background: #f1f2f4;
        font: 10px Lato, sans-serif;
    }
    .address input {
        flex: 1;
        margin-left: -4px;
    }
    .toolbar .shield {
        position: relative;
        margin-right: 10px;
    }
    .shield span {
        position: absolute;
        right: -4px;
        bottom: -4px;
        padding: 0 2px;
        border-radius: 2px;
        background: #5c5c5c;
        color: #fff;
        font: 7px Roboto, sans-serif;
    }
    .toolbar .puzzle {
        margin-right: 5px;
    }
    .profile {
        width: 55px;
        height: 19px;
        gap: 5px;
        padding-right: 2px;
        border: 1px solid #4c3c6a;
        border-radius: 10px;
        background: #f4f0fa;
        color: #3d3068;
        font: 8px Roboto, sans-serif;
    }
    .profile b {
        width: 15px;
        border-radius: 50%;
        background: #c1125f;
        color: #fff;
        font-weight: 400;
        line-height: 15px;
    }
    .toolbar .more {
        margin-right: 0;
    }

    /* sidebar */
    .app {
        display: flex;
        flex: 1;
    }
    aside {
        display: flex;
        flex-direction: column;
        width: 160px;
        background: #999;
    }
    .logo {
        display: flex;
        gap: 5px;
        height: 54px;
        padding: 6px 0 0 16px;
        font-family: "Liberation Serif", serif;
    }
    .logo div {
        display: flex;
        flex-direction: column;
    }
    .logo strong {
        color: #1c2450;
        font-size: 28px;
        font-weight: 400;
        line-height: 25px;
    }
    .logo small {
        color: #315c4c;
        font-size: 9px;
        line-height: 10px;
    }
    nav a {
        display: flex;
        align-items: center;
        gap: 4px;
        height: 28px;
        padding: 0 9px 1px 8px;
        color: #272727;
        text-decoration: none;
    }
    nav span {
        flex: 1;
        padding-left: 1px;
        white-space: nowrap;
    }
    nav .active {
        background: #83839a;
        color: #25286f;
    }
    .reply {
        width: 34px;
        height: 34px;
        margin: auto 0 6px 56px;
        border-radius: 50%;
        background: #484848;
    }

    /* page */
    main {
        flex: 1;
        display: flex;
        flex-direction: column;
        min-width: 0;
    }
    .top {
        display: flex;
        align-items: center;
        height: 41px;
        padding: 3px 17px 0 9px;
        border-left: 1px solid #8b8b8b;
        background: #999;
    }
    .top h1 {
        margin-right: auto;
    }
    .select {
        display: grid;
        align-items: center;
    }
    .select > :global(*) {
        grid-area: 1 / 1;
    }
    .select :global(svg) {
        justify-self: end;
        pointer-events: none;
    }
    .organization, .list, .type {
        height: 27px;
        border: 1px solid #838388;
        border-radius: 2px;
        padding: 0 5px 0 10px;
        color: #333;
    }
    .organization {
        width: 200px;
        margin-right: 31px;
    }
    .phone {
        margin: 0 5px 6px 0;
    }
    .top > span {
        padding-bottom: 4px;
    }
    .top > .initials {
        width: 26px;
        margin-left: 6px;
        padding: 0;
        border-radius: 50%;
        background: #8f2533;
        color: #ccc;
        font-size: 12px;
        line-height: 26px;
        text-align: center;
    }
    section {
        flex: 1;
        margin: 5px 12px 20px 5px;
        border: 1px solid #85858b;
        border-radius: 2px;
        background: #999;
    }
    .filters {
        display: flex;
        align-items: center;
        gap: 6px;
        height: 40px;
        padding: 0 13px;
        border-bottom: 1px solid #808085;
    }
    .filters h2 {
        margin-right: auto;
        font-weight: 400;
    }
    .list {
        width: 140px;
    }
    .type {
        width: 141px;
    }
    .add {
        width: 134px;
        height: 27px;
        padding-right: 6px;
        border-radius: 2px;
        background: #1f296e;
        color: #b6b9cc;
    }
    .add span {
        flex: 1;
    }
    .download {
        width: 27px;
        height: 27px;
        border: 1px solid #8a8a8d;
        border-radius: 2px;
    }
    .contacts {
        width: calc(100% - 27px);
        height: 480px;
        margin: 11px 13px 0;
        border-collapse: collapse;
        table-layout: fixed;
        white-space: nowrap;
    }
    .contacts th {
        height: 33px;
        padding: 0 0 2px;
        background: #929292;
        font-weight: 700;
        text-align: left;
    }
    .contacts tr {
        border-bottom: 1px solid #7a7a82;
    }
    .contacts td {
        padding: 0 0 2px;
    }
    .contacts input {
        display: block;
        width: 12px;
        height: 12px;
        margin-left: 7px;
        border: 1px solid #838388;
    }
    .contacts td.created {
        padding-bottom: 4px;
    }
    .contacts button {
        margin-left: 4px;
    }
    .c-check {
        width: 43px;
    }
    .c-avatar {
        width: 76px;
    }
    .c-name {
        width: 129px;
    }
    .c-email {
        width: 107px;
    }
    .c-phone {
        width: 139px;
    }
    .c-type {
        width: 106px;
    }
    .c-created {
        width: 187px;
    }
    .c-more {
        width: 20px;
    }
    .tag {
        display: inline-block;
        margin-right: 1px;
        padding: 1px 10px;
        border-radius: 9px;
        background: #878792;
        font-size: 10px;
    }
    .pages {
        display: flex;
        width: fit-content;
        margin: 9px 21px 12px auto;
        border: 1px solid #7f7f86;
        border-radius: 2px;
    }
    .pages button {
        width: 21px;
        height: 21px;
        border-right: 1px solid #85858b;
    }
    .pages button:last-child {
        border-right: 0;
    }
    .pages .off {
        color: #666;
    }
    .pages .current {
        background: #1d2570;
        color: #bbb;
    }

    /* taskbar */
    .taskbar {
        display: flex;
        height: 27px;
        background: linear-gradient(90deg, #1e333a, #20323b 50%, #16254a);
        color: #fff;
    }
    .start {
        width: 32px;
    }
    .search {
        display: flex;
        align-items: center;
        gap: 7px;
        width: 229px;
        padding-left: 8px;
        background: #f3f3f3;
        color: #333;
        font: 10px "Open Sans", sans-serif;
    }
    .search input {
        flex: 1;
    }
    input::placeholder {
        color: #444;
        opacity: 1;
    }
    .apps {
        display: flex;
        width: 327px;
    }
    .apps button {
        position: relative;
        flex: 1;
        border-bottom: 2px solid transparent;
        padding-top: 2px;
    }
    .apps .running {
        border-color: #8ebce0;
    }
    .apps .front {
        background: #4c5d65;
    }
    .count {
        position: absolute;
        right: 3px;
        bottom: 1px;
        min-width: 11px;
        padding: 0 1px;
        border: 1px solid #99a3a8;
        border-radius: 50%;
        background: #25343c;
        color: #fff;
        font: 8px/9px "Open Sans", sans-serif;
        text-align: center;
    }
    .tray {
        display: flex;
        align-items: center;
        margin-left: auto;
        padding-right: 4px;
        font: 9px "Open Sans", sans-serif;
    }
    .weather {
        margin: 0 11px 0 5px;
    }
    .signals {
        display: flex;
        gap: 10px;
        align-items: center;
    }
    .clock {
        display: flex;
        flex-direction: column;
        margin: 0 12px 0 8px;
        font: 8px/12px Lato, sans-serif;
        text-align: center;
    }
    .notes {
        position: relative;
        width: 24px;
        height: 24px;
        padding-right: 8px;
    }
    .notes .count {
        right: 0;
    }

    /* upload modal and the file dialog that lies over it */
    .modal {
        position: absolute;
        top: 94px;
        left: 50%;
        width: 466px;
        height: 251px;
        transform: translateX(-50%);
        background: #fff;
        box-shadow: 0 1px 4px rgba(0, 0, 0, .5);
    }
    .modal-head {
        display: flex;
        justify-content: flex-end;
        height: 35px;
        padding-right: 15px;
        border-bottom: 1px solid #ddd;
        color: #111;
    }
    .dialog {
        position: absolute;
        top: 13px;
        left: 183px;
        width: 631px;
        border: 1px solid #555;
        background: #fff;
        box-shadow: 1px 2px 8px rgba(0, 0, 0, .5);
        color: #1c1c1c;
        font: 8px/12px Lato, sans-serif;
    }
    .title {
        display: flex;
        align-items: center;
        gap: 4px;
        height: 19px;
        padding: 0 6px;
    }
    .title button {
        margin-left: auto;
    }
    .path-row {
        display: flex;
        align-items: center;
        gap: 7px;
        height: 28px;
        padding: 0 8px;
        color: #444;
    }
    .path {
        display: flex;
        align-items: center;
        flex: 1;
        gap: 4px;
        height: 20px;
        border: 1px solid #d9d9d9;
        color: #222;
    }
    .drop {
        margin-left: auto;
    }
    .refresh {
        align-self: stretch;
        width: 22px;
        border-left: 1px solid #d9d9d9;
    }
    .find {
        display: flex;
        align-items: center;
        gap: 7px;
        width: 135px;
        height: 20px;
        padding-left: 9px;
        border: 1px solid #d9d9d9;
    }
    .commands {
        display: flex;
        align-items: center;
        gap: 20px;
        height: 22px;
        padding: 0 10px 0 12px;
        border-bottom: 1px solid #e5e5e5;
        background: #f5f6f7;
    }
    .commands button {
        gap: 4px;
    }
    .views {
        display: flex;
        align-items: center;
        gap: 14px;
        margin-left: auto;
    }
    .commands .help {
        width: 11px;
        height: 11px;
        border-radius: 50%;
        background: #0b559f;
        color: #fff;
        font-weight: 700;
    }
    .browse {
        display: flex;
        height: 234px;
    }
    ul {
        width: 93px;
        margin: 0;
        padding: 10px 0 0;
        list-style: none;
        overflow: hidden;
        white-space: nowrap;
    }
    li {
        display: flex;
        align-items: center;
        gap: 3px;
        height: 16px;
        padding-left: 20px;
    }
    li span {
        flex: 1;
        overflow: hidden;
    }
    li.top-level {
        padding-left: 16px;
        gap: 2px;
    }
    li.spaced {
        margin-top: 5px;
    }
    li.current {
        background: #d9d9d9;
    }
    .pin {
        margin-right: 2px;
    }
    .scroll {
        display: flex;
        flex-direction: column;
        align-items: center;
        gap: 3px;
        width: 10px;
        padding: 2px 0;
        background: #f0f0f0;
    }
    .scroll i {
        width: 10px;
        background: #cdcdcd;
    }
    .scroll > :global(:last-child) {
        margin-top: auto;
    }
    .left-thumb {
        height: 197px;
    }
    .right-thumb {
        height: 118px;
        margin-top: auto;
    }
    .scroll .right-thumb + :global(svg) {
        margin-top: 0;
    }
    .files {
        display: flex;
        flex-direction: column;
        flex: 1;
        padding-left: 13px;
        white-space: nowrap;
    }
    .files tr {
        display: grid;
        grid-template-columns: 172px 80px 80px 53px;
        width: 385px;
    }
    .files thead {
        color: #555;
    }
    .files th {
        display: flex;
        height: 16px;
        padding: 2px 0 0 4px;
        border-right: 1px solid #e3e3e3;
        font-weight: 400;
    }
    .files th :global(svg) {
        margin: -3px auto 0 58px;
    }
    .files th:first-child {
        padding-left: 2px;
    }
    .files tbody {
        display: flex;
        flex: 1;
        flex-direction: column;
        justify-content: flex-end;
        height: 0;
        overflow: hidden;
    }
    .files td {
        height: 14px;
        padding: 1px 4px;
        color: #666;
    }
    .files td:first-child {
        display: flex;
        align-items: center;
        gap: 2px;
        padding-left: 2px;
        color: #1c1c1c;
    }
    .files td:last-child {
        text-align: right;
    }
    .files .hover {
        background: #e5f3ff;
    }
    .bottom {
        position: relative;
        display: grid;
        grid-template-columns: 127px 1fr 125px;
        align-items: center;
        align-content: start;
        gap: 3px 0;
        height: 51px;
        padding: 5px 11px 0 0;
        background: #f0f0f0;
    }
    .bottom label {
        padding-right: 4px;
        text-align: right;
    }
    .name {
        height: 17px;
        margin-right: 8px;
        padding: 0 2px;
        border: 1px solid #3f7f96;
        background: #fff;
    }
    .kind {
        height: 17px;
        padding: 0 2px;
        border: 1px solid #bbb;
        background: #e6e6e6;
    }
    .actions {
        grid-column: 3;
        display: flex;
        justify-content: space-between;
    }
    .actions button {
        width: 58px;
        height: 16px;
        border: 1px solid #b5b5b5;
        background: #e2e2e2;
    }
    .actions .primary {
        border: 2px solid #22688f;
    }
    .grip {
        position: absolute;
        right: 0;
        bottom: 0;
    }
    .tooltip {
        position: absolute;
        top: 318px;
        left: 382px;
        display: flex;
        flex-direction: column;
        padding: 1px 3px;
        border: 1px solid #777;
        background: #fff;
        box-shadow: 2px 2px 2px rgba(0, 0, 0, .4);
        color: #555;
        font: 8px/10px Lato, sans-serif;
        white-space: nowrap;
    }
    .pointer {
        position: absolute;
        top: 306px;
        left: 382px;
    }
</style>
